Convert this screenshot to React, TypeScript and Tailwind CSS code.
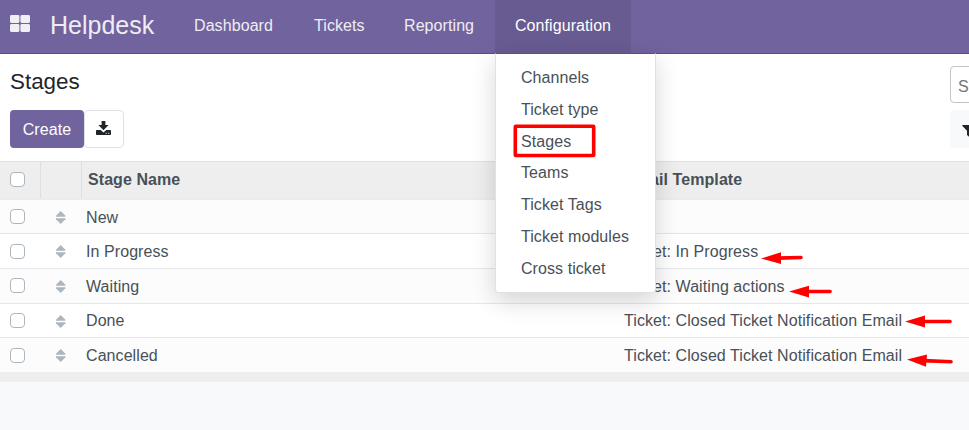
import React from "react";

const navItems = [
  { label: "Dashboard", width: "w-[120px]" },
  { label: "Tickets", width: "w-[90px]" },
  { label: "Reporting", width: "w-[111px]" },
];

const menuItems = [
  "Channels",
  "Ticket type",
  "Stages",
  "Teams",
  "Ticket Tags",
  "Ticket modules",
  "Cross ticket",
];

const rows = [
  { name: "New", template: "", cls: "h-[34px] bg-[#fcfcfc] border-b", text: "pt-[2px]" },
  { name: "In Progress", template: "Ticket: In Progress", cls: "h-[35px] bg-white border-b", text: "pt-px" },
  { name: "Waiting", template: "Ticket: Waiting actions", cls: "h-[35px] bg-[#fcfcfc] border-b pb-px", text: "pt-[2px]" },
  { name: "Done", template: "Ticket: Closed Ticket Notification Email", cls: "h-[34px] bg-white border-b", text: "pt-px" },
  { name: "Cancelled", template: "Ticket: Closed Ticket Notification Email", cls: "h-[34px] bg-[#fcfcfc]", text: "pt-px" },
];

function AppsIcon() {
  return (
    <svg width="20" height="17" viewBox="0 0 20 17" fill="#f1eff5">
      <rect x="0" y="0" width="9.400" height="8" rx="1.400" />
      <rect x="10.400" y="0" width="9.600" height="8" rx="1.400" />
      <rect x="0" y="9" width="9.400" height="8" rx="1.400" />
      <rect x="10.400" y="9" width="9.600" height="8" rx="1.400" />
    </svg>
  );
}

function DownloadIcon() {
  return (
    <svg width="15" height="14" viewBox="0 0 15 14" fill="#212529">
      <path d="M5.600 0h3.800v4h3.200L7.500 9.300 2.400 4h3.200z" />
      <path
        fillRule="evenodd"
        d="M.800 9h3.900l2.800 2.400L10.300 9h3.900c.5 0 .8.3.8.8v3.400c0 .5-.3.8-.8.8H.8c-.5 0-.8-.3-.8-.8V9.800c0-.5.3-.8.8-.8zM9.700 11.700h1v1h-1zM12.200 11.700h1v1h-1z"
      />
    </svg>
  );
}

function SortHandle() {
  return (
    <svg width="10" height="13" viewBox="0 0 10 13" fill="#adb5bd" className="mt-px">
      <path d="M4.700 0 9.400 4.800v1H0v-1z" />
      <path d="M0 7.200h9.400v1L4.700 13 0 8.200z" />
    </svg>
  );
}

function Checkbox() {
  return <span className="block size-[15px] rounded-[4px] border border-[#adb5bd] bg-white" />;
}

function Arrow({ d, head }: { d: string; head: string }) {
  return (
    <g>
      <path d={d} stroke="#ff0000" strokeWidth="3.600" strokeLinecap="round" />
      <path d={head} fill="#ff0000" />
    </g>
  );
}

export default function App() {
  return (
    <div className="relative h-[430px] w-[969px] overflow-hidden bg-[#f8f9fa] font-['Liberation_Sans',Arial,sans-serif] text-[16px] leading-6 text-[#495057]">
      <nav className="flex h-[54px] items-stretch border-b border-[#5a4f7f] bg-[#71639e] text-[#efedf4]">
        <div className="w-[50px] pt-[15px] pl-[10px]">
          <AppsIcon />
        </div>
        <div className="w-[124px] pt-[9px] text-[25px] leading-[32px]">Helpdesk</div>
        {navItems.map((item) => (
          <div key={item.label} className={`${item.width} shrink-0 pt-[14px] pl-5 tracking-[0.08px]`}>
            {item.label}
          </div>
        ))}
        <div className="relative w-[136px] bg-[#685b91] pt-[14px] pl-5 tracking-[0.07px] text-white">
          Configuration
          <div className="absolute top-[53px] left-0 z-10 h-[240px] w-[161px] rounded-b-[4px] border border-[#dee2e6] border-t-[#5a4f7f] bg-white pt-[9px] pl-[25px] text-[#495057] shadow-[0_8px_24px_rgba(0,0,0,0.16)]">
            {menuItems.map((item) => (
              <div key={item} className="h-[31.8px] pt-[3px] leading-6">
                {item}
              </div>
            ))}
          </div>
        </div>
      </nav>

      <header className="flex h-[107px] justify-between bg-white">
        <div className="pl-[10px]">
          <h1 className="pt-[12px] text-[22.400px] leading-[32px] text-[#212529]">Stages</h1>
          <div className="mt-[12px] flex">
            <button className="h-[38px] w-[74px] rounded-[4px] bg-[#71639e] pt-[2px] tracking-[0.08px] text-white">
              Create
            </button>
            <button className="flex h-[38px] w-[40px] items-center justify-center rounded-[4px] border border-[#dee2e6] bg-white pr-px pb-[2px]">
              <DownloadIcon />
            </button>
          </div>
        </div>
        <div className="w-[19px] overflow-hidden pt-[12px]">
          <div className="h-[37px] w-[200px] rounded-[4px] border border-[#c4c4c4] pt-[8px] pl-[7px] text-[#757575]">
            S
          </div>
          <div className="mt-[7px] h-[38px] w-[90px] rounded-[4px] bg-[#f8f9fa] pt-[15px] pl-[12px]">
            <svg width="13" height="13" viewBox="0 0 13 13" fill="#212529">
              <path d="M.5 0h12l.3.800L8 5.700V12.500L5 10V5.700L.200.800z" />
            </svg>
          </div>
        </div>
      </header>

      <main className="tracking-[0.075px]">
        <div className="flex h-[39px] border-t border-b-2 border-t-[#dee2e6] border-b-[#e9ecef] bg-[#eeeeee] font-bold">
          <div className="w-[41px] border-r border-[#dddfe1] pt-[10px] pl-[10px]">
            <Checkbox />
          </div>
          <div className="w-[41px] border-r border-[#dddfe1]" />
          <div className="w-[542px] pt-[6px] pl-[6px]">Stage Name</div>
          <div className="pt-[6px] pl-px">Email Template</div>
        </div>
        {rows.map((row) => (
          <div key={row.name} className={`flex items-center border-[#e4e7ea] ${row.cls}`}>
            <div className="w-[56px] pl-[10px]">
              <Checkbox />
            </div>
            <div className="w-[30px]">
              <SortHandle />
            </div>
            <div className={`w-[538px] ${row.text}`}>{row.name}</div>
            <div className={`whitespace-nowrap ${row.text}`}>{row.template}</div>
          </div>
        ))}
        <div className="h-[10px] bg-[#eeeeee]" />
      </main>

      <svg className="absolute inset-0 z-20" width="969" height="430" fill="none">
        <rect x="515.300" y="126.300" width="78.400" height="29.200" rx="0.500" stroke="#ff0000" strokeWidth="3.600" />
        <Arrow d="M778 258.100 801 257.500" head="M761 258.500 781 252.300V264z" />
        <Arrow d="M806 291.500H830" head="M789 291.600 809 285.700V297.500z" />
        <Arrow d="M922 321.500H950" head="M905 321.500 925 315.600V327.500z" />
        <Arrow d="M924 360.600 951 361.700" head="M907 359.500 927 354.500 926 366.700z" />
      </svg>
    </div>
  );
}
